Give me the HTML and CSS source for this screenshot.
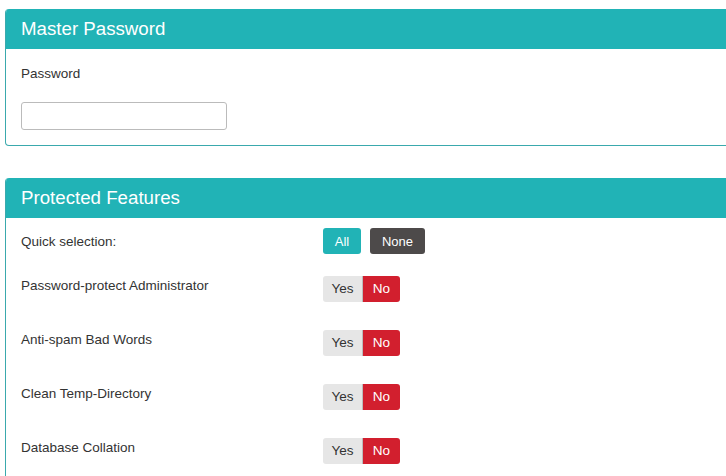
FILE: index.html
```html
<!DOCTYPE html>
<html>
<head>
<meta charset="utf-8">
<link rel="stylesheet" href="styles.css">
</head>
<body>
<div class="page">
  <section class="card">
    <h2 class="card-head">Master Password</h2>
    <div class="card-body pw-body">
      <label class="pw-label">Password</label>
      <input class="pw-input" type="password">
    </div>
  </section>

  <section class="card">
    <h2 class="card-head">Protected Features</h2>
    <div class="card-body feat-body">
      <div class="row quick">
        <div class="label label-quick">Quick selection:</div>
        <div class="controls">
          <button class="btn btn-all">All</button>
          <button class="btn btn-none">None</button>
        </div>
      </div>
      <div class="row">
        <div class="label">Password-protect Administrator</div>
        <div class="toggle"><span class="t-yes">Yes</span><span class="t-no">No</span></div>
      </div>
      <div class="row">
        <div class="label">Anti-spam Bad Words</div>
        <div class="toggle"><span class="t-yes">Yes</span><span class="t-no">No</span></div>
      </div>
      <div class="row">
        <div class="label">Clean Temp-Directory</div>
        <div class="toggle"><span class="t-yes">Yes</span><span class="t-no">No</span></div>
      </div>
      <div class="row">
        <div class="label">Database Collation</div>
        <div class="toggle"><span class="t-yes">Yes</span><span class="t-no">No</span></div>
      </div>
    </div>
  </section>
</div>
</body>
</html>
```

FILE: styles.css
```css
html, body {
  margin: 0;
  padding: 0;
  background: #fff;
  overflow: hidden;
}
body {
  font-family: "Liberation Sans", Arial, sans-serif;
  color: #333;
  font-size: 13.5px;
}
.page {
  padding: 9px 0 0 5px;
  display: flex;
  flex-direction: column;
  gap: 32px;
  width: 740px;
}
.card {
  border: 1px solid #3aa9ad;
  border-top: 0;
  border-radius: 4px;
  overflow: hidden;
  background: #fff;
}
.card-head {
  margin: 0;
  height: 40px;
  line-height: 40px;
  background: #21b3b6;
  color: #fff;
  font-weight: normal;
  font-size: 18.7px;
  padding-left: 15px;
}
.card-body {
  padding: 0 15px;
}
.pw-body {
  padding-top: 16px;
  padding-bottom: 15px;
}
.pw-label {
  display: block;
  line-height: 18px;
  margin-bottom: 19px;
}
.pw-input {
  display: block;
  width: 206px;
  height: 28px;
  box-sizing: border-box;
  border: 1px solid #bbb;
  border-radius: 3px;
  margin: 0;
  padding: 0 6px;
}
.feat-body {
  padding-top: 10px;
  padding-bottom: 28px;
  display: flex;
  flex-direction: column;
  gap: 28px;
}
.row {
  display: flex;
  align-items: flex-start;
  height: 26px;
}
.row.quick {
  margin-bottom: -6px;
}
.label {
  width: 302px;
  flex: none;
  line-height: 18px;
  padding-top: 1px;
}
.label-quick {
  padding-top: 5px;
}
.controls {
  display: flex;
  gap: 9px;
}
.btn {
  font-family: inherit;
  font-size: 13px;
  border: 0;
  border-radius: 3px;
  height: 26px;
  padding: 0;
  color: #fff;
  cursor: pointer;
}
.btn-all {
  width: 38px;
  background: #21b3b6;
}
.btn-none {
  width: 55px;
  background: #4d4a4a;
}
.toggle {
  display: flex;
  height: 26px;
  font-size: 13.5px;
  line-height: 26px;
}
.t-yes {
  width: 40px;
  text-align: center;
  background: #e6e6e6;
  color: #333;
  border-radius: 3px 0 0 3px;
  box-sizing: border-box;
  border-right: 1px solid #bdbdbd;
}
.t-no {
  width: 37px;
  text-align: center;
  background: #d21f2e;
  color: #fff;
  border-radius: 0 3px 3px 0;
}
```
